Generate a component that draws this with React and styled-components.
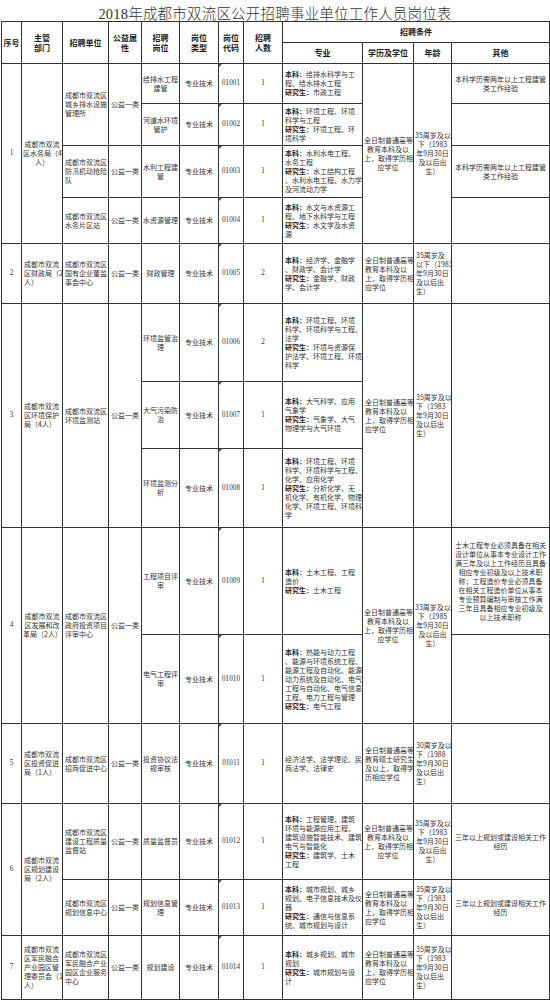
import React from 'react';
import styled, { createGlobalStyle } from 'styled-components';

const GlobalStyle = createGlobalStyle`
  html, body {
    margin: 0;
    padding: 0;
    background: #fff;
  }
  body {
    font-family: "Noto Sans CJK SC", "Noto Sans", sans-serif;
  }
`;

const COLS = [20, 41, 46, 33, 38, 39, 25, 39, 80, 51, 38, 98];

const EDU = ['全日制普通高等', '教育本科及以', '上，取得学历相', '应学位'];
const AGE83 = ['35周岁及以', '下（1983', '年9月30日', '及以后出', '生）'];
const OTHER_JG = ['本科学历需两年以上工程建管', '类工作经验'];
const OTHER_GH = ['三年以上规划或建设相关工作', '经历'];

const ROWS = [
  {
    h: 40,
    seq: { v: '1', span: 4 },
    dept: { lines: ['成都市双流', '区水务局（4', '人）'], span: 4, align: 'center' },
    unit: { lines: ['成都市双流区', '城乡排水设施', '管理所'], span: 2 },
    kind: { span: 2 },
    post: ['给排水工程', '建管'],
    code: '01001',
    count: '1',
    major: ['本科：给排水科学与工', '程、给水排水工程', '研究生：市政工程'],
    edu: { lines: EDU, span: 4, align: 'center' },
    age: { lines: AGE83, span: 4, align: 'center' },
    other: { lines: OTHER_JG },
  },
  {
    h: 42,
    post: ['河道水环境', '管护'],
    code: '01002',
    count: '1',
    major: ['本科：环境工程、环境', '科学与工程', '研究生：环境工程、环', '境科学'],
    other: { lines: [] },
  },
  {
    h: 52,
    unit: { lines: ['成都市双流区', '防汛机动抢险', '队'] },
    kind: {},
    post: ['水利工程建', '管'],
    code: '01003',
    count: '1',
    major: ['本科：水利水电工程、', '水务工程', '研究生：水工结构工程', '、水利水电工程、水力学', '及河流动力学'],
    other: { lines: OTHER_JG },
  },
  {
    h: 46,
    unit: { lines: ['成都市双流区', '水务片区站'] },
    kind: {},
    post: ['水资源管理'],
    code: '01004',
    count: '1',
    major: ['本科：水文与水资源工', '程、地下水科学与工程', '研究生：水文学及水资', '源'],
    other: { lines: [] },
  },
  {
    h: 60,
    seq: { v: '2' },
    dept: { lines: ['成都市双流', '区财政局（2', '人）'] },
    unit: { lines: ['成都市双流区', '国有企业董监', '事会中心'] },
    kind: {},
    post: ['财政管理'],
    code: '01005',
    count: '2',
    major: ['本科：经济学、金融学', '、财政学、会计学', '研究生：金融学、财政', '学、会计学'],
    edu: { lines: EDU, align: 'left' },
    age: { lines: ['35周岁及', '以下（1983', '年9月30日', '及以后出', '生）'], align: 'left' },
    other: { lines: [] },
  },
  {
    h: 78,
    seq: { v: '3', span: 3 },
    dept: { lines: ['成都市双流', '区环境保护', '局（4人）'], span: 3 },
    unit: { lines: ['成都市双流区', '环境监测站'], span: 3 },
    kind: { span: 3 },
    post: ['环境监管治', '理'],
    code: '01006',
    count: '2',
    major: ['本科：环境工程、环境', '科学、环境科学与工程、', '法学', '研究生：环境与资源保', '护法学、环境工程、环境', '科学'],
    edu: { lines: EDU, span: 3, align: 'left' },
    age: { lines: AGE83, span: 3, align: 'left' },
    other: { lines: [], span: 3 },
  },
  {
    h: 67,
    post: ['大气污染防', '治'],
    code: '01007',
    count: '1',
    major: ['本科：大气科学、应用', '气象学', '研究生：气象学、大气', '物理学与大气环境'],
  },
  {
    h: 79,
    post: ['环境监测分', '析'],
    code: '01008',
    count: '1',
    major: ['本科：环境工程、环境', '科学、环境科学与工程、', '化学、应用化学', '研究生：分析化学、无', '机化学、有机化学、物理', '化学、环境工程、环境科', '学'],
  },
  {
    h: 107,
    seq: { v: '4', span: 2 },
    dept: { lines: ['成都市双流', '区发展和改', '革局（2人）'], span: 2, align: 'center' },
    unit: { lines: ['成都市双流区', '政府投资项目', '评审中心'], span: 2 },
    kind: { span: 2 },
    post: ['工程项目评', '审'],
    code: '01009',
    count: '1',
    major: ['本科：土木工程、工程', '造价', '研究生：土木工程'],
    edu: { lines: EDU, span: 2, align: 'center' },
    age: { lines: ['33周岁及以', '下（1985', '年9月30日', '及以后出', '生）'], span: 2, align: 'center' },
    other: {
      lines: [
        '土木工程专业必须具备在相关',
        '设计单位从事本专业设计工作',
        '满三年及以上工作经历且具备',
        '相应专业初级及以上技术职',
        '称；工程造价专业必须具备',
        '在相关工程造价单位从事本',
        '专业预算编制与审核工作满',
        '三年且具备相应专业初级及',
        '以上技术职称',
      ],
    },
  },
  {
    h: 89,
    post: ['电气工程评', '审'],
    code: '01010',
    count: '1',
    major: ['本科：热能与动力工程', '、能源与环境系统工程、', '能源工程及自动化、能源', '动力系统及自动化、电气', '工程与自动化、电气信息', '工程、电力工程与管理', '研究生：电气工程'],
    other: { lines: [] },
  },
  {
    h: 80,
    seq: { v: '5' },
    dept: { lines: ['成都市双流', '区投资促进', '局（1人）'] },
    unit: { lines: ['成都市双流区', '招商促进中心'] },
    kind: {},
    post: ['投资协议法', '规审核'],
    code: '01011',
    count: '1',
    major: ['经济法学、法学理论、民', '商法学、法律史'],
    edu: { lines: ['全日制普通高等', '教育硕士研究生', '及以上，取得学', '历相应学位'], align: 'left' },
    age: { lines: ['30周岁及以', '下（1988', '年9月30日', '及以后出', '生）'], align: 'left' },
    other: { lines: [] },
  },
  {
    h: 76,
    seq: { v: '6', span: 2 },
    dept: { lines: ['成都市双流', '区规划建设', '局（2人）'], span: 2 },
    unit: { lines: ['成都市双流区', '建设工程质量', '监督站'] },
    kind: {},
    post: ['质量监督员'],
    code: '01012',
    count: '1',
    major: ['本科：工程管理、建筑', '环境与能源应用工程、', '建筑设施智能技术、建筑', '电气与智能化', '研究生：建筑学、土木', '工程'],
    edu: { lines: EDU, align: 'center' },
    age: { lines: AGE83, align: 'center' },
    other: { lines: OTHER_GH },
  },
  {
    h: 56,
    unit: { lines: ['成都市双流区', '规划信息中心'] },
    kind: {},
    post: ['规划信息管', '理'],
    code: '01013',
    count: '1',
    major: ['本科：城市规划、城乡', '规划、电子信息技术及仪', '器', '研究生：通信与信息系', '统、城市规划与设计'],
    edu: { lines: EDU, align: 'left' },
    age: { lines: AGE83, align: 'left' },
    other: { lines: OTHER_GH },
  },
  {
    h: 64,
    seq: { v: '7' },
    dept: { lines: ['成都市双流', '区军民融合', '产业园区管', '理委员会（1', '人）'] },
    unit: { lines: ['成都市双流区', '军民融合产业', '园区企业服务', '中心'] },
    kind: {},
    post: ['规划建设'],
    code: '01014',
    count: '1',
    major: ['本科：城乡规划、城市', '规划', '研究生：城市规划与设', '计'],
    edu: { lines: EDU, align: 'left' },
    age: { lines: AGE83, align: 'left' },
    other: { lines: [] },
  },
];

const Page = styled.div`
  width: 550px;
  background: #fff;
`;

const Title = styled.div`
  height: 21px;
  display: flex;
  align-items: flex-end;
  justify-content: center;
  font-family: "Liberation Serif", "Noto Sans CJK SC", serif;
  font-size: 14.5px;
  font-weight: 300;
  line-height: 1;
  color: #333;
  letter-spacing: 0.2px;
`;

const Table = styled.table`
  margin-left: 1px;
  width: 548px;
  border-collapse: collapse;
  table-layout: fixed;
`;

const HeadCell = styled.th`
  border: 1px solid #333;
  padding: 0;
  font-size: 8px;
  line-height: 10px;
  font-weight: 700;
  color: #1a1a1a;
  text-align: center;
  vertical-align: middle;
`;

const Cell = styled.td`
  position: relative;
  border: 1px solid #333;
  padding: 0 1px 0 ${(p) => (p.$align === 'left' ? '2px' : '1px')};
  font-size: 7px;
  line-height: 9px;
  color: #333;
  text-align: ${(p) => p.$align || 'center'};
  vertical-align: middle;
  overflow: hidden;
`;

const NumCell = styled(Cell)`
  font-family: "Liberation Serif", serif;
  font-size: 7.2px;
`;

const CodeCell = styled(NumCell)`
  &::before {
    content: '';
    position: absolute;
    left: 0;
    top: 0;
    border-top: 3px solid #2b5d3a;
    border-right: 3px solid transparent;
  }
`;

const Line = styled.div`
  white-space: nowrap;
`;

const Label = styled.b`
  font-weight: 700;
  color: #1e1e1e;
`;

const Lines = ({ lines }) =>
  lines.map((l, i) => <Line key={i}>{l}</Line>);

const MajorLines = ({ lines }) =>
  lines.map((l, i) => {
    const m = l.match(/^(本科：|研究生：)(.*)$/);
    return (
      <Line key={i}>
        {m ? (
          <>
            <Label>{m[1]}</Label>
            {m[2]}
          </>
        ) : (
          l
        )}
      </Line>
    );
  });

const Row = ({ r }) => (
  <tr style={{ height: r.h }}>
    {r.seq && <NumCell rowSpan={r.seq.span || 1}>{r.seq.v}</NumCell>}
    {r.dept && (
      <Cell rowSpan={r.dept.span || 1} $align={r.dept.align || 'left'}>
        <Lines lines={r.dept.lines} />
      </Cell>
    )}
    {r.unit && (
      <Cell rowSpan={r.unit.span || 1} $align="left">
        <Lines lines={r.unit.lines} />
      </Cell>
    )}
    {r.kind && <Cell rowSpan={r.kind.span || 1}>公益一类</Cell>}
    <Cell>
      <Lines lines={r.post} />
    </Cell>
    <Cell>专业技术</Cell>
    <CodeCell>{r.code}</CodeCell>
    <NumCell>{r.count}</NumCell>
    <Cell $align="left">
      <MajorLines lines={r.major} />
    </Cell>
    {r.edu && (
      <Cell rowSpan={r.edu.span || 1} $align={r.edu.align}>
        <Lines lines={r.edu.lines} />
      </Cell>
    )}
    {r.age && (
      <Cell rowSpan={r.age.span || 1} $align={r.age.align}>
        <Lines lines={r.age.lines} />
      </Cell>
    )}
    {r.other && (
      <Cell rowSpan={r.other.span || 1}>
        <Lines lines={r.other.lines} />
      </Cell>
    )}
  </tr>
);

export default function App() {
  return (
    <Page>
      <GlobalStyle />
      <Title>2018年成都市双流区公开招聘事业单位工作人员岗位表</Title>
      <Table>
        <colgroup>
          {COLS.map((w, i) => (
            <col key={i} style={{ width: w }} />
          ))}
        </colgroup>
        <thead>
          <tr style={{ height: 21 }}>
            <HeadCell rowSpan={2}>序号</HeadCell>
            <HeadCell rowSpan={2}>主管<br />部门</HeadCell>
            <HeadCell rowSpan={2}>招聘单位</HeadCell>
            <HeadCell rowSpan={2}>公益属<br />性</HeadCell>
            <HeadCell rowSpan={2}>招聘<br />岗位</HeadCell>
            <HeadCell rowSpan={2}>岗位<br />类型</HeadCell>
            <HeadCell rowSpan={2}>岗位<br />代码</HeadCell>
            <HeadCell rowSpan={2}>招聘<br />人数</HeadCell>
            <HeadCell colSpan={4}>招聘条件</HeadCell>
          </tr>
          <tr style={{ height: 21 }}>
            <HeadCell>专业</HeadCell>
            <HeadCell>学历及学位</HeadCell>
            <HeadCell>年龄</HeadCell>
            <HeadCell>其他</HeadCell>
          </tr>
        </thead>
        <tbody>
          {ROWS.map((r) => (
            <Row key={r.code} r={r} />
          ))}
        </tbody>
      </Table>
    </Page>
  );
}
